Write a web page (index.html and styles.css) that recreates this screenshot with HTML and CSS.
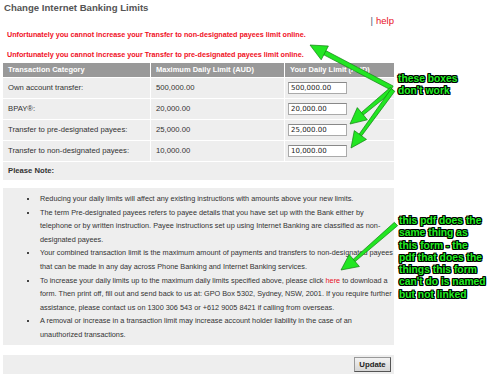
FILE: index.html
```html
<!DOCTYPE html>
<html>
<head>
<meta charset="utf-8">
<link rel="stylesheet" href="styles.css">
</head>
<body>
<div class="page">
  <h1 class="title">Change Internet Banking Limits</h1>
  <div class="helprow"><span class="sep">|</span><a class="help">help</a></div>
  <p class="err">Unfortunately you cannot increase your Transfer to non-designated payees limit online.</p>
  <p class="err">Unfortunately you cannot increase your Transfer to pre-designated payees limit online.</p>
  <table class="limits">
    <thead>
      <tr><th class="c1">Transaction Category</th><th class="c2">Maximum Daily Limit (AUD)</th><th class="c3">Your Daily Limit (AUD)</th></tr>
    </thead>
    <tbody>
      <tr><td class="c1">Own account transfer:</td><td class="c2">500,000.00</td><td class="c3"><input class="amt" value="500,000.00"></td></tr>
      <tr><td class="c1">BPAY®:</td><td class="c2">20,000.00</td><td class="c3"><input class="amt" value="20,000.00"></td></tr>
      <tr><td class="c1">Transfer to pre-designated payees:</td><td class="c2">25,000.00</td><td class="c3"><input class="amt" value="25,000.00"></td></tr>
      <tr><td class="c1">Transfer to non-designated payees:</td><td class="c2">10,000.00</td><td class="c3"><input class="amt" value="10,000.00"></td></tr>
      <tr class="noterow"><td colspan="3">Please Note:</td></tr>
    </tbody>
  </table>
  <div class="notes">
    <ul>
      <li>Reducing your daily limits will affect any existing instructions with amounts above your new limits.</li>
      <li>The term Pre-designated payees refers to payee details that you have set up with the Bank either by telephone or by written instruction. Payee instructions set up using Internet Banking are classified as non-designated payees.</li>
      <li>Your combined transaction limit is the maximum amount of payments and transfers to non-designated payees that can be made in any day across Phone Banking and Internet Banking services.</li>
      <li>To increase your daily limits up to the maximum daily limits specified above, please click <a class="here">here</a> to download a form. Then print off, fill out and send back to us at: GPO Box 5302, Sydney, NSW, 2001. If you require further assistance, please contact us on 1300 306 543 or +612 9005 8421 if calling from overseas.</li>
      <li>A removal or increase in a transaction limit may increase account holder liability in the case of an unauthorized transactions.</li>
    </ul>
  </div>
  <div class="actions"><button class="update">Update</button></div>
</div>

<svg class="arrows" width="490" height="378" viewBox="0 0 490 378">
  <g fill="#22e622" stroke="#138013" stroke-width="0.7" stroke-linejoin="round">
    <polygon points="393.1,86 325.6,50.5 322.8,54.3 390.9,90"/>
    <polygon points="310,45 328.4,46 321.2,59.8"/>
    <polygon points="390.5,87.3 361.3,112.6 363.3,115 393.5,90.8"/>
    <polygon points="350,124 367.4,119.8 357.3,107.6"/>
    <polygon points="394.8,91.3 361.6,135.9 359.2,134.1 391.2,88.7"/>
    <polygon points="351,148 366.5,139.4 354.3,130.6"/>
    <polygon points="397.6,225.7 355.1,261.6 353.1,259.4 394.4,222.3"/>
    <polygon points="341,270 359.4,266.5 349.2,254.5"/>
  </g>
</svg>
<div class="callout co1">these boxes<br>don't work</div>
<div class="callout co2">this pdf does the<br>same thing as<br>this form - the<br>pdf that does the<br>things this form<br>can't do is named<br>but not linked</div>
</body>
</html>
```

FILE: styles.css
```css
html, body {
  margin: 0;
  padding: 0;
  background: #fff;
}
body {
  font-family: "Liberation Sans", Arial, sans-serif;
  color: #333;
  width: 490px;
  height: 378px;
  overflow: hidden;
  position: relative;
}
.page {
  width: 391px;
  padding-left: 3px;
}
.title {
  margin: 0;
  height: 14px;
  font-size: 9.6px;
  line-height: 16px;
  font-weight: bold;
  color: #555;
  padding-left: 1px;
}
.helprow {
  display: flex;
  justify-content: flex-end;
  align-items: center;
  height: 12px;
  margin-top: 1px;
  font-size: 9.5px;
  line-height: 12px;
}
.sep {
  color: #4a5a7a;
  margin-right: 3px;
}
.help {
  color: #e8101e;
}
.err {
  margin: 2px 0 0 4px;
  height: 12px;
  font-size: 7.2px;
  line-height: 12px;
  font-weight: bold;
  color: #f0101e;
}
.err + .err {
  margin-top: 8px;
}
.limits {
  margin-top: 2px;
  width: 391px;
  border-collapse: collapse;
  table-layout: fixed;
  font-size: 7.7px;
}
.limits th {
  background: #999;
  color: #fff;
  text-align: left;
  font-weight: bold;
  height: 14px;
  padding: 0 0 0 5px;
  font-size: 7.5px;
  line-height: 14px;
}
.limits th.c1, .limits td.c1 { width: 142px; }
.limits th.c2, .limits td.c2 { width: 128px; border-left: 1px solid #fff; }
.limits th.c3, .limits td.c3 { border-left: 1px solid #fff; }
.limits td {
  background: #eee;
  height: 20px;
  padding: 0 0 0 5px;
  border-top: 1px solid #fff;
  color: #333;
  line-height: 12px;
}
.amt {
  display: block;
  box-sizing: border-box;
  width: 59px;
  height: 12px;
  margin: 0 0 0 -2px;
  padding: 0 0 0 2px;
  border: 1px solid #aaa;
  border-top-color: #888;
  background: #fff;
  font-family: "DejaVu Sans", Verdana, sans-serif;
  font-size: 7px;
  color: #222;
}
.noterow td {
  font-weight: bold;
  color: #333;
  height: 18px;
}
.notes {
  margin-top: 8px;
  background: #eee;
  height: 157px;
  box-sizing: border-box;
  padding-top: 4px;
}
.notes ul {
  margin: 0;
  padding: 0 1px 0 37px;
  list-style: none;
  font-size: 7.3px;
  line-height: 13.6px;
  color: #333;
}
.notes li {
  position: relative;
}
.notes li::before {
  content: "";
  position: absolute;
  left: -13px;
  top: 6px;
  width: 2px;
  height: 2px;
  background: #444;
}
.here {
  color: #e8101e;
}
.actions {
  margin-top: 10px;
  background: #eee;
  height: 19px;
  display: flex;
  justify-content: flex-end;
  align-items: center;
  padding-right: 3px;
}
.update {
  width: 37px;
  height: 15px;
  padding: 0;
  font-family: "Liberation Sans", Arial, sans-serif;
  font-size: 7.8px;
  font-weight: bold;
  color: #222;
  background: linear-gradient(#f2f2f2, #d6d6d6);
  border: 1px solid #999;
  border-right-color: #555;
  border-bottom-color: #555;
}
.arrows {
  position: absolute;
  left: 0;
  top: 0;
  pointer-events: none;
}
.callout {
  position: absolute;
  font-family: "Liberation Sans", Arial, sans-serif;
  font-weight: bold;
  font-size: 10.3px;
  line-height: 12.3px;
  white-space: nowrap;
  color: #22ee22;
  text-shadow: -1px -1px 0 #000, 1px -1px 0 #000, -1px 1px 0 #000, 1px 1px 0 #000, 0 1px 0 #000, 0 -1px 0 #000, 1px 0 0 #000, -1px 0 0 #000;
}
.co1 {
  left: 398px;
  top: 73px;
}
.co2 {
  left: 399px;
  top: 215px;
}
```
